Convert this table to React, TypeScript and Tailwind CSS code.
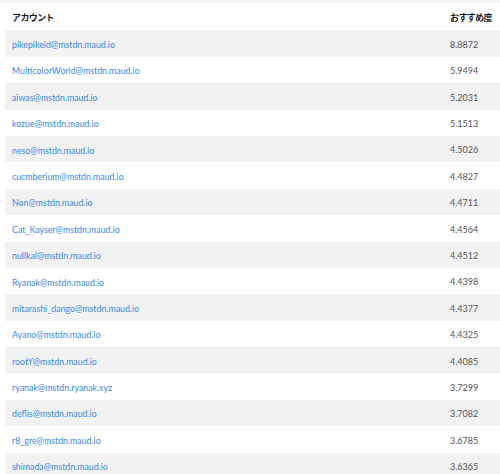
import React from "react";

const rows: [string, string][] = [
  ["pikepikeid@mstdn.maud.io", "8.8872"],
  ["MulticolorWorld@mstdn.maud.io", "5.9494"],
  ["aiwas@mstdn.maud.io", "5.2031"],
  ["kozue@mstdn.maud.io", "5.1513"],
  ["neso@mstdn.maud.io", "4.5026"],
  ["cucmberium@mstdn.maud.io", "4.4827"],
  ["Non@mstdn.maud.io", "4.4711"],
  ["Cat_Kayser@mstdn.maud.io", "4.4564"],
  ["nullkal@mstdn.maud.io", "4.4512"],
  ["Ryanak@mstdn.maud.io", "4.4398"],
  ["mitarashi_dango@mstdn.maud.io", "4.4377"],
  ["Ayano@mstdn.maud.io", "4.4325"],
  ["rootY@mstdn.maud.io", "4.4085"],
  ["ryanak@mstdn.ryanak.xyz", "3.7299"],
  ["deflis@mstdn.maud.io", "3.7082"],
  ["r8_gre@mstdn.maud.io", "3.6785"],
  ["shimada@mstdn.maud.io", "3.6365"],
];

export default function App() {
  return (
    <div
      className="w-[500px] h-[474px] overflow-hidden bg-white"
      style={{ fontFamily: 'Lato, "Noto Sans CJK JP", sans-serif' }}
    >
      <div className="h-[3px] bg-[#f4f4f4]" />
      <div className="ml-[5px] mt-[1px]">
        <div className="flex h-[26.4px] items-center whitespace-nowrap pt-[2px] text-[9px] font-bold text-[#1a1a1a] tracking-[-0.6px]">
          <div className="flex-1 pl-[7px]">アカウント</div>
          <div className="w-[56px] pl-[6px]">おすすめ度</div>
        </div>
        {rows.map(([name, score], i) => (
          <div
            key={name}
            className={`flex h-[26.4px] items-center whitespace-nowrap pt-[2px] ${i % 2 === 0 ? "bg-[#f2f2f2]" : "bg-white"}`}
          >
            <div className="flex-1 pl-[7px] text-[8.8px]">
              <a className="text-[#3888f0]">{name}</a>
            </div>
            <div className="w-[56px] pl-[6px] text-[9px] text-[#555]">{score}</div>
          </div>
        ))}
      </div>
    </div>
  );
}
